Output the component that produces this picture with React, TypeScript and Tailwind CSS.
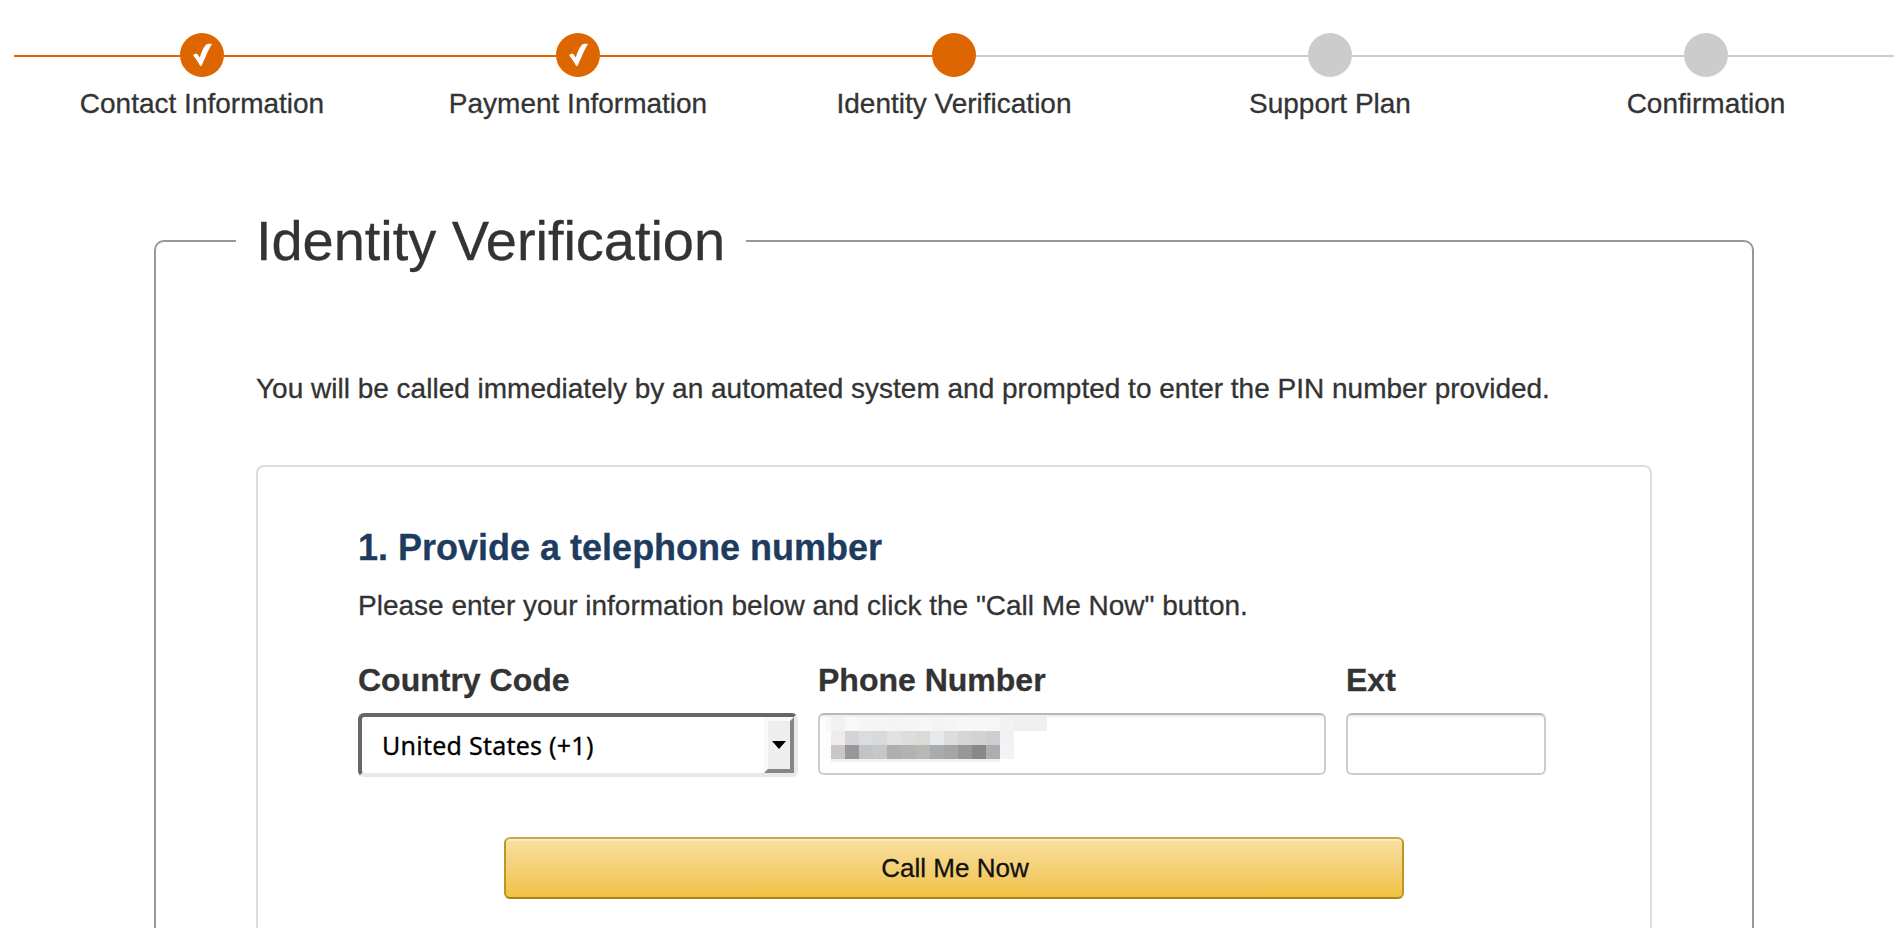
import React from 'react';

type StepState = 'done' | 'current' | 'todo';

const steps: { label: string; state: StepState }[] = [
  { label: 'Contact Information', state: 'done' },
  { label: 'Payment Information', state: 'done' },
  { label: 'Identity Verification', state: 'current' },
  { label: 'Support Plan', state: 'todo' },
  { label: 'Confirmation', state: 'todo' },
];

function Step({ label, state }: { label: string; state: StepState }) {
  const left = state === 'todo' ? 'bg-[#cccccc]' : 'bg-[#dd6600]';
  const right = state === 'done' ? 'bg-[#dd6600]' : 'bg-[#cccccc]';
  const dot = state === 'todo' ? 'bg-[#cccccc]' : 'bg-[#dd6600]';
  return (
    <li className="flex w-[376px] flex-col items-center">
      <div className="flex w-full items-center">
        <span className={`mt-[2px] h-[2px] flex-1 ${left}`} />
        <span className={`h-11 w-11 rounded-full ${dot}`}>
          {state === 'done' && (
            <svg viewBox="0 0 44 44" className="h-11 w-11" fill="#fff">
              <path d="M13.2 22.4 L14 21.2 L16.8 20.6 L19.8 24.6 C21.4 19.2 23.2 14.6 26 11.8 C27.500 10.800 29.900 10.700 32 11 C27.800 17.500 25.400 24.500 21.400 33 L20.200 33 C18.400 29 16 26 13.200 22.400 Z" />
            </svg>
          )}
        </span>
        <span className={`mt-[2px] h-[2px] flex-1 ${right}`} />
      </div>
      <span className="mt-[11px] text-[28px] leading-[32px]">{label}</span>
    </li>
  );
}

const mosaic: string[][] = [
  ['#f1f1f1', '#f8f8f8', '#f5f5f5', '#f5f5f5', '#f4f4f4', '#f5f5f5', '#f6f6f6', '#f4f4f3', '#f5f5f5', '#f7f7f7', '#f6f6f6', '#f6f6f6', '#f2f2f2'],
  ['#eeecea', '#d4d4d4', '#dadce0', '#d7d9dd', '#e1e1e1', '#dddddd', '#dadad9', '#e7eaea', '#dddddb', '#d6d6d6', '#d1d3d3', '#cecece', '#eff1f5'],
  ['#cbc6c6', '#98989a', '#c2c3c7', '#c6c8c8', '#b0adaf', '#b0b3b3', '#b7b7b4', '#a8aaae', '#a5a5a5', '#979797', '#888888', '#abadb0', '#f2f3f6'],
];

export default function App() {
  return (
    <div className="h-[928px] w-[1902px] overflow-hidden bg-white font-['Liberation_Sans',Arial,sans-serif] text-[#333333] [-webkit-text-stroke:0.3px]">
      <ol className="flex pl-[14px] pt-[33px]">
        {steps.map((s) => (
          <Step key={s.label} {...s} />
        ))}
      </ol>

      <fieldset className="ml-[154px] mt-[89px] h-[760px] w-[1600px] rounded-[10px] border-2 border-[#999999] pl-[80px]">
        <legend className="w-[510px] px-5 text-[56px] leading-[64px] tracking-[-0.05px]">Identity Verification</legend>
        <div className="ml-5 mt-[100px] w-[1396px]">
          <p className="whitespace-nowrap text-[28px] leading-[32px]">
            You will be called immediately by an automated system and prompted to enter the PIN number provided.
          </p>
          <section className="mt-[60px] h-[600px] rounded-[8px] border-2 border-[#dddddd] pl-[100px] pt-[61px]">
            <h2 className="text-[36px] font-bold leading-[40px] text-[#1e3c60]">1. Provide a telephone number</h2>
            <p className="mt-[22px] text-[28px] leading-[32px]">
              Please enter your information below and click the "Call Me Now" button.
            </p>
            <div className="mt-[40px] flex gap-5">
              <label className="flex w-[440px] flex-col">
                <span className="text-[32px] font-bold leading-[36px]">Country Code</span>
                <span className="mt-[15px] flex h-16 items-stretch rounded-[6px] border-4 border-b-[#e8e8e8] border-l-[#666666] border-r-[#e8e8e8] border-t-[#666666] bg-white">
                  <span className="flex-1 pl-[20px] font-['Noto_Sans',sans-serif] text-[25px] leading-[56px] tracking-[0.25px] text-black">
                    United States (+1)
                  </span>
                  <span className="flex w-[30px] items-center justify-center border-4 border-b-[#858585] border-l-[#f9f9f9] border-r-[#858585] border-t-[#f9f9f9] bg-[#eeeeee]">
                    <svg width="14" height="8" viewBox="0 0 14 8">
                      <path d="M0 0H14L7 8Z" fill="#000" />
                    </svg>
                  </span>
                </span>
              </label>
              <label className="flex w-[508px] flex-col">
                <span className="text-[32px] font-bold leading-[36px]">Phone Number</span>
                <span className="mt-[15px] flex h-[62px] rounded-[6px] border-2 border-[#cccccc] border-t-[#b8b8b8] pl-[5px] pt-[2px] shadow-[inset_0_2px_0_#eeeeee]">
                  <span className="flex flex-col">
                    {mosaic.map((row, i) => (
                      <span key={i} className="flex h-[14px]">
                        <span className={i === 0 ? 'w-[6px] bg-[#f9f9f9]' : 'w-[6px] bg-[#fdfdfd]'} />
                        {row.map((c, j) => (
                          <span key={j} className="w-[14.1px]" style={{ backgroundColor: c }} />
                        ))}
                        {i === 0 && <span className="w-[33px] bg-[#efefef]" />}
                      </span>
                    ))}
                    <span className="ml-[6px] h-[3px] w-[169px] bg-[#f0f0f0]" />
                  </span>
                </span>
              </label>
              <label className="flex w-[200px] flex-col">
                <span className="text-[32px] font-bold leading-[36px]">Ext</span>
                <span className="mt-[15px] h-[62px] rounded-[6px] border-2 border-[#cccccc] border-t-[#b8b8b8] shadow-[inset_0_2px_0_#eeeeee]" />
              </label>
            </div>
            <button className="ml-[146px] mt-[60px] block h-[62px] w-[900px] rounded-[6px] border-2 border-b-[#a88218] border-l-[#be9626] border-r-[#be9626] border-t-[#cba746] bg-linear-to-b from-[#f8e0a2] to-[#f1c03c] bg-origin-border pl-[2px] text-[26px] leading-[30px] text-[#111111] shadow-[inset_0_2px_0_#fbebc4]">
              Call Me Now
            </button>
          </section>
        </div>
      </fieldset>
    </div>
  );
}
